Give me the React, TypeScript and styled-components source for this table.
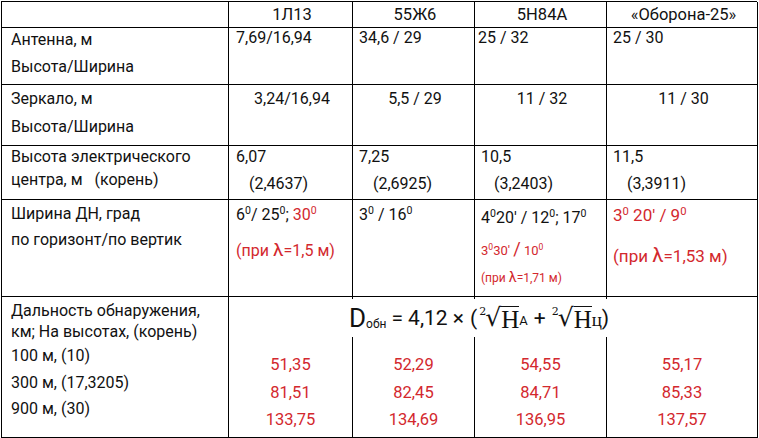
import * as React from 'react';
import styled, { createGlobalStyle } from 'styled-components';

// *** Global ***
const GlobalStyle = createGlobalStyle`
    html, body {
        margin: 0;
        padding: 0;
        background: #ffffff;
    }
    body {
        font-family: Roboto, "Open Sans", "Noto Sans", sans-serif;
        color: #111111;
        font-size: 16px;
    }
`

const RED = '#d3282e';

// *** Styled Components ***
const Table = styled.div`
    display: grid;
    grid-template-columns: 227px 124px 122px 132px 151px;
    grid-template-rows: 26px 57px 61px 54px 97px 141px;
    width: 756px;
    margin: 1px 0 0 1px;
    border-left: 1px solid #000;
    border-top: 1px solid #000;
    box-sizing: border-box;
`
const Cell = styled.div<{ $center?: boolean; $pl?: number; $pt?: number }>`
    box-sizing: border-box;
    border-right: 1px solid #000;
    border-bottom: 1px solid #000;
    padding: ${p => p.$pt ?? 0}px 4px 0 ${p => p.$pl ?? 7}px;
    text-align: ${p => (p.$center ? 'center' : 'left')};
    white-space: nowrap;
    overflow: hidden;
`
const HeadCell = styled(Cell)`
    text-align: center;
    line-height: 26px;
    font-size: 16.5px;
`
const Line = styled.div<{ $lh: number; $indent?: number; $size?: number; $red?: boolean }>`
    line-height: ${p => p.$lh}px;
    padding-left: ${p => p.$indent ?? 0}px;
    font-size: ${p => p.$size ?? 16}px;
    color: ${p => (p.$red ? RED : 'inherit')};
`
const Red = styled.span`
    color: ${RED};
`
const Deg = styled.sup`
    font-size: 0.66em;
    line-height: 0;
    vertical-align: 0.55em;
`
const Lambda = styled.span`
    font-size: 1.2em;
`
const Slash = styled.span`
    font-size: 1.4em;
`

// *** last row: numbers under the formula ***
const RangeBlock = styled.div`
    grid-column: 2 / 6;
    position: relative;
    display: grid;
    grid-template-columns: 124px 122px 132px 151px;
`
const NumCell = styled(Cell)`
    text-align: center;
    padding: 54px 0 0 0;
    color: ${RED};
`
const Formula = styled.div`
    position: absolute;
    left: 116px;
    top: 2px;
    height: 38px;
    padding: 0 4px;
    background: #ffffff;
    display: flex;
    align-items: center;
    font-size: 21px;
    white-space: nowrap;
`
const BigD = styled.span`
    font-size: 26px;
`
const Sub = styled.span`
    font-size: 12px;
    align-self: flex-end;
    margin-bottom: 6px;
    margin-right: 5px;
`
const Root = styled.span`
    display: inline-flex;
    align-items: flex-start;
    font-family: "DejaVu Serif", "Liberation Serif", serif;
`
const RootIndex = styled.span`
    font-size: 11px;
    margin-top: 2px;
    margin-right: -1px;
`
const RootSign = styled.span`
    font-size: 25px;
    line-height: 30px;
`
const Radicand = styled.span`
    font-family: "Liberation Serif", serif;
    font-size: 25px;
    line-height: 26px;
    border-top: 1.5px solid #111;
    margin-top: 3px;
`
const SmallA = styled.span`
    font-size: 13px;
    align-self: flex-end;
    margin-bottom: 9px;
`
const SmallTse = styled.span`
    font-family: "Liberation Serif", serif;
    font-size: 19px;
    align-self: flex-end;
    margin-bottom: 6px;
`
const Op = styled.span<{ $l?: number; $r?: number }>`
    margin: 0 ${p => p.$r ?? 6}px 0 ${p => p.$l ?? 6}px;
`

const headers = ['1Л13', '55Ж6', '5Н84А', '«Оборона-25»'];

const ranges = [
    ['51,35', '81,51', '133,75'],
    ['52,29', '82,45', '134,69'],
    ['54,55', '84,71', '136,95'],
    ['55,17', '85,33', '137,57'],
];

const App: React.FC = () => {
    return (
        <>
            <GlobalStyle />
            <Table>
                {/* header */}
                <HeadCell />
                {headers.map(h => <HeadCell key={h}>{h}</HeadCell>)}

                {/* antenna */}
                <Cell $pl={9}>
                    <Line $lh={24}>Антенна, м</Line>
                    <Line $lh={30}>Высота/Ширина</Line>
                </Cell>
                <Cell><Line $lh={20}>7,69/16,94</Line></Cell>
                <Cell $pl={6}><Line $lh={20}>34,6 / 29</Line></Cell>
                <Cell $pl={3}><Line $lh={20}>25 / 32</Line></Cell>
                <Cell $pl={6}><Line $lh={20}>25 / 30</Line></Cell>

                {/* mirror */}
                <Cell $pl={9} $pt={1}>
                    <Line $lh={26}>Зеркало, м</Line>
                    <Line $lh={30}>Высота/Ширина</Line>
                </Cell>
                <Cell $center $pt={1}><Line $lh={26}>3,24/16,94</Line></Cell>
                <Cell $center $pt={1}><Line $lh={26}>5,5 / 29</Line></Cell>
                <Cell $center $pt={1}><Line $lh={26}>11 / 32</Line></Cell>
                <Cell $center $pt={1}><Line $lh={26}>11 / 30</Line></Cell>

                {/* electric center */}
                <Cell $pl={9}>
                    <Line $lh={21}>Высота электрического</Line>
                    <Line $lh={25}>центра, м&nbsp;&nbsp;&nbsp;(корень)</Line>
                </Cell>
                <Cell>
                    <Line $lh={21}>6,07</Line>
                    <Line $lh={34} $indent={13}>(2,4637)</Line>
                </Cell>
                <Cell $pl={6}>
                    <Line $lh={21}>7,25</Line>
                    <Line $lh={34} $indent={14}>(2,6925)</Line>
                </Cell>
                <Cell $pl={6}>
                    <Line $lh={21}>10,5</Line>
                    <Line $lh={34} $indent={13}>(3,2403)</Line>
                </Cell>
                <Cell $pl={6}>
                    <Line $lh={21}>11,5</Line>
                    <Line $lh={34} $indent={14}>(3,3911)</Line>
                </Cell>

                {/* beam width */}
                <Cell $pl={9} $pt={1}>
                    <Line $lh={26}>Ширина ДН, град</Line>
                    <Line $lh={26}>по горизонт/по вертик</Line>
                </Cell>
                <Cell $pt={1}>
                    <Line $lh={28}>6<Deg>0</Deg>/ 25<Deg>0</Deg>; <Red>30<Deg>0</Deg></Red></Line>
                    <Line $lh={42} $red>(при <Lambda>λ</Lambda>=1,5 м)</Line>
                </Cell>
                <Cell $pl={6} $pt={1}>
                    <Line $lh={28}>3<Deg>0</Deg> / 16<Deg>0</Deg></Line>
                </Cell>
                <Cell $pl={6} $pt={5}>
                    <Line $lh={26}>4<Deg>0</Deg>20′ / 12<Deg>0</Deg>; 17<Deg>0</Deg></Line>
                    <Line $lh={36} $red $size={13}>3<Deg>0</Deg>30′ <Slash>/</Slash> 10<Deg>0</Deg></Line>
                    <Line $lh={18} $red $size={12}>(при <Lambda>λ</Lambda>=1,71 м)</Line>
                </Cell>
                <Cell $pl={6} $pt={1}>
                    <Line $lh={28} $red $size={17}>3<Deg>0</Deg> 20′ / 9<Deg>0</Deg></Line>
                    <Line $lh={52} $red $size={17}>(при <Lambda>λ</Lambda>=1,53 м)</Line>
                </Cell>

                {/* detection range */}
                <Cell $pl={9} $pt={3}>
                    <Line $lh={21}>Дальность обнаружения,</Line>
                    <Line $lh={22}>км; На высотах, (корень)</Line>
                    <Line $lh={26}>100 м, (10)</Line>
                    <Line $lh={27}>300 м, (17,3205)</Line>
                    <Line $lh={26}>900 м, (30)</Line>
                </Cell>
                <RangeBlock>
                    {ranges.map((col, i) => (
                        <NumCell key={i}>
                            {col.map(v => <Line key={v} $lh={27.5} $size={16.5}>{v}</Line>)}
                        </NumCell>
                    ))}
                    <Formula>
                        <BigD>D</BigD>
                        <Sub>обн</Sub>
                        = 4,12 ×
                        <Op $r={2}>(</Op>
                        <Root>
                            <RootIndex>2</RootIndex>
                            <RootSign>√</RootSign>
                        </Root>
                        <Radicand>H</Radicand>
                        <SmallA>А</SmallA>
                        <Op>+</Op>
                        <Root>
                            <RootIndex>2</RootIndex>
                            <RootSign>√</RootSign>
                        </Root>
                        <Radicand>H</Radicand>
                        <SmallTse>ц</SmallTse>
                        <span>)</span>
                    </Formula>
                </RangeBlock>
            </Table>
        </>
    );
}

export default App;
